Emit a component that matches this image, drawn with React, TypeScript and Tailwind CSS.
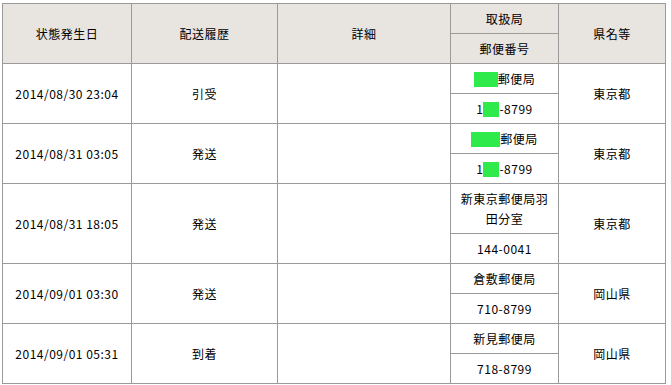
import React from "react";

interface Record {
  date: string;
  status: string;
  office: React.ReactNode;
  postal: React.ReactNode;
  pref: string;
}

const Mask = ({ w }: { w: string }) => (
  <span className={`inline-block h-[15px] align-[-3px] bg-[#2eea4a] ${w}`} />
);

const records: Record[] = [
  {
    date: "2014/08/30 23:04",
    status: "引受",
    office: (
      <>
        <Mask w="w-[24px]" />
        郵便局
      </>
    ),
    postal: (
      <>
        1<Mask w="w-[16px]" />
        -8799
      </>
    ),
    pref: "東京都",
  },
  {
    date: "2014/08/31 03:05",
    status: "発送",
    office: (
      <>
        <Mask w="w-[29px]" />
        郵便局
      </>
    ),
    postal: (
      <>
        1<Mask w="w-[16px]" />
        -8799
      </>
    ),
    pref: "東京都",
  },
  {
    date: "2014/08/31 18:05",
    status: "発送",
    office: (
      <>
        新東京郵便局羽
        <br />
        田分室
      </>
    ),
    postal: "144-0041",
    pref: "東京都",
  },
  {
    date: "2014/09/01 03:30",
    status: "発送",
    office: "倉敷郵便局",
    postal: "710-8799",
    pref: "岡山県",
  },
  {
    date: "2014/09/01 05:31",
    status: "到着",
    office: "新見郵便局",
    postal: "718-8799",
    pref: "岡山県",
  },
];

const cell = "border border-[#9a9a9a] text-center align-middle pt-[5px] pb-[4px] px-1 leading-[20px]";

export default function App() {
  return (
    <div
      className="pl-[2px] pt-[3px] bg-white text-[12px] tracking-[0.5px] text-black"
      style={{ fontFamily: '"Noto Sans CJK JP", "Liberation Sans", sans-serif' }}
    >
      <table className="border-collapse table-fixed w-[664px]">
        <colgroup>
          <col className="w-[129px]" />
          <col className="w-[146px]" />
          <col className="w-[173px]" />
          <col className="w-[108px]" />
          <col />
        </colgroup>
        <thead className="bg-[#e8e4e0]">
          <tr>
            <th rowSpan={2} className={`${cell} font-normal`}>状態発生日</th>
            <th rowSpan={2} className={`${cell} font-normal`}>配送履歴</th>
            <th rowSpan={2} className={`${cell} font-normal`}>詳細</th>
            <th className={`${cell} font-normal`}>取扱局</th>
            <th rowSpan={2} className={`${cell} font-normal`}>県名等</th>
          </tr>
          <tr>
            <th className={`${cell} font-normal`}>郵便番号</th>
          </tr>
        </thead>
        <tbody>
          {records.map((r, i) => (
            <React.Fragment key={i}>
              <tr>
                <td rowSpan={2} className={cell}>{r.date}</td>
                <td rowSpan={2} className={cell}>{r.status}</td>
                <td rowSpan={2} className={cell}></td>
                <td className={cell}>{r.office}</td>
                <td rowSpan={2} className={cell}>{r.pref}</td>
              </tr>
              <tr>
                <td className={cell}>{r.postal}</td>
              </tr>
            </React.Fragment>
          ))}
        </tbody>
      </table>
    </div>
  );
}
